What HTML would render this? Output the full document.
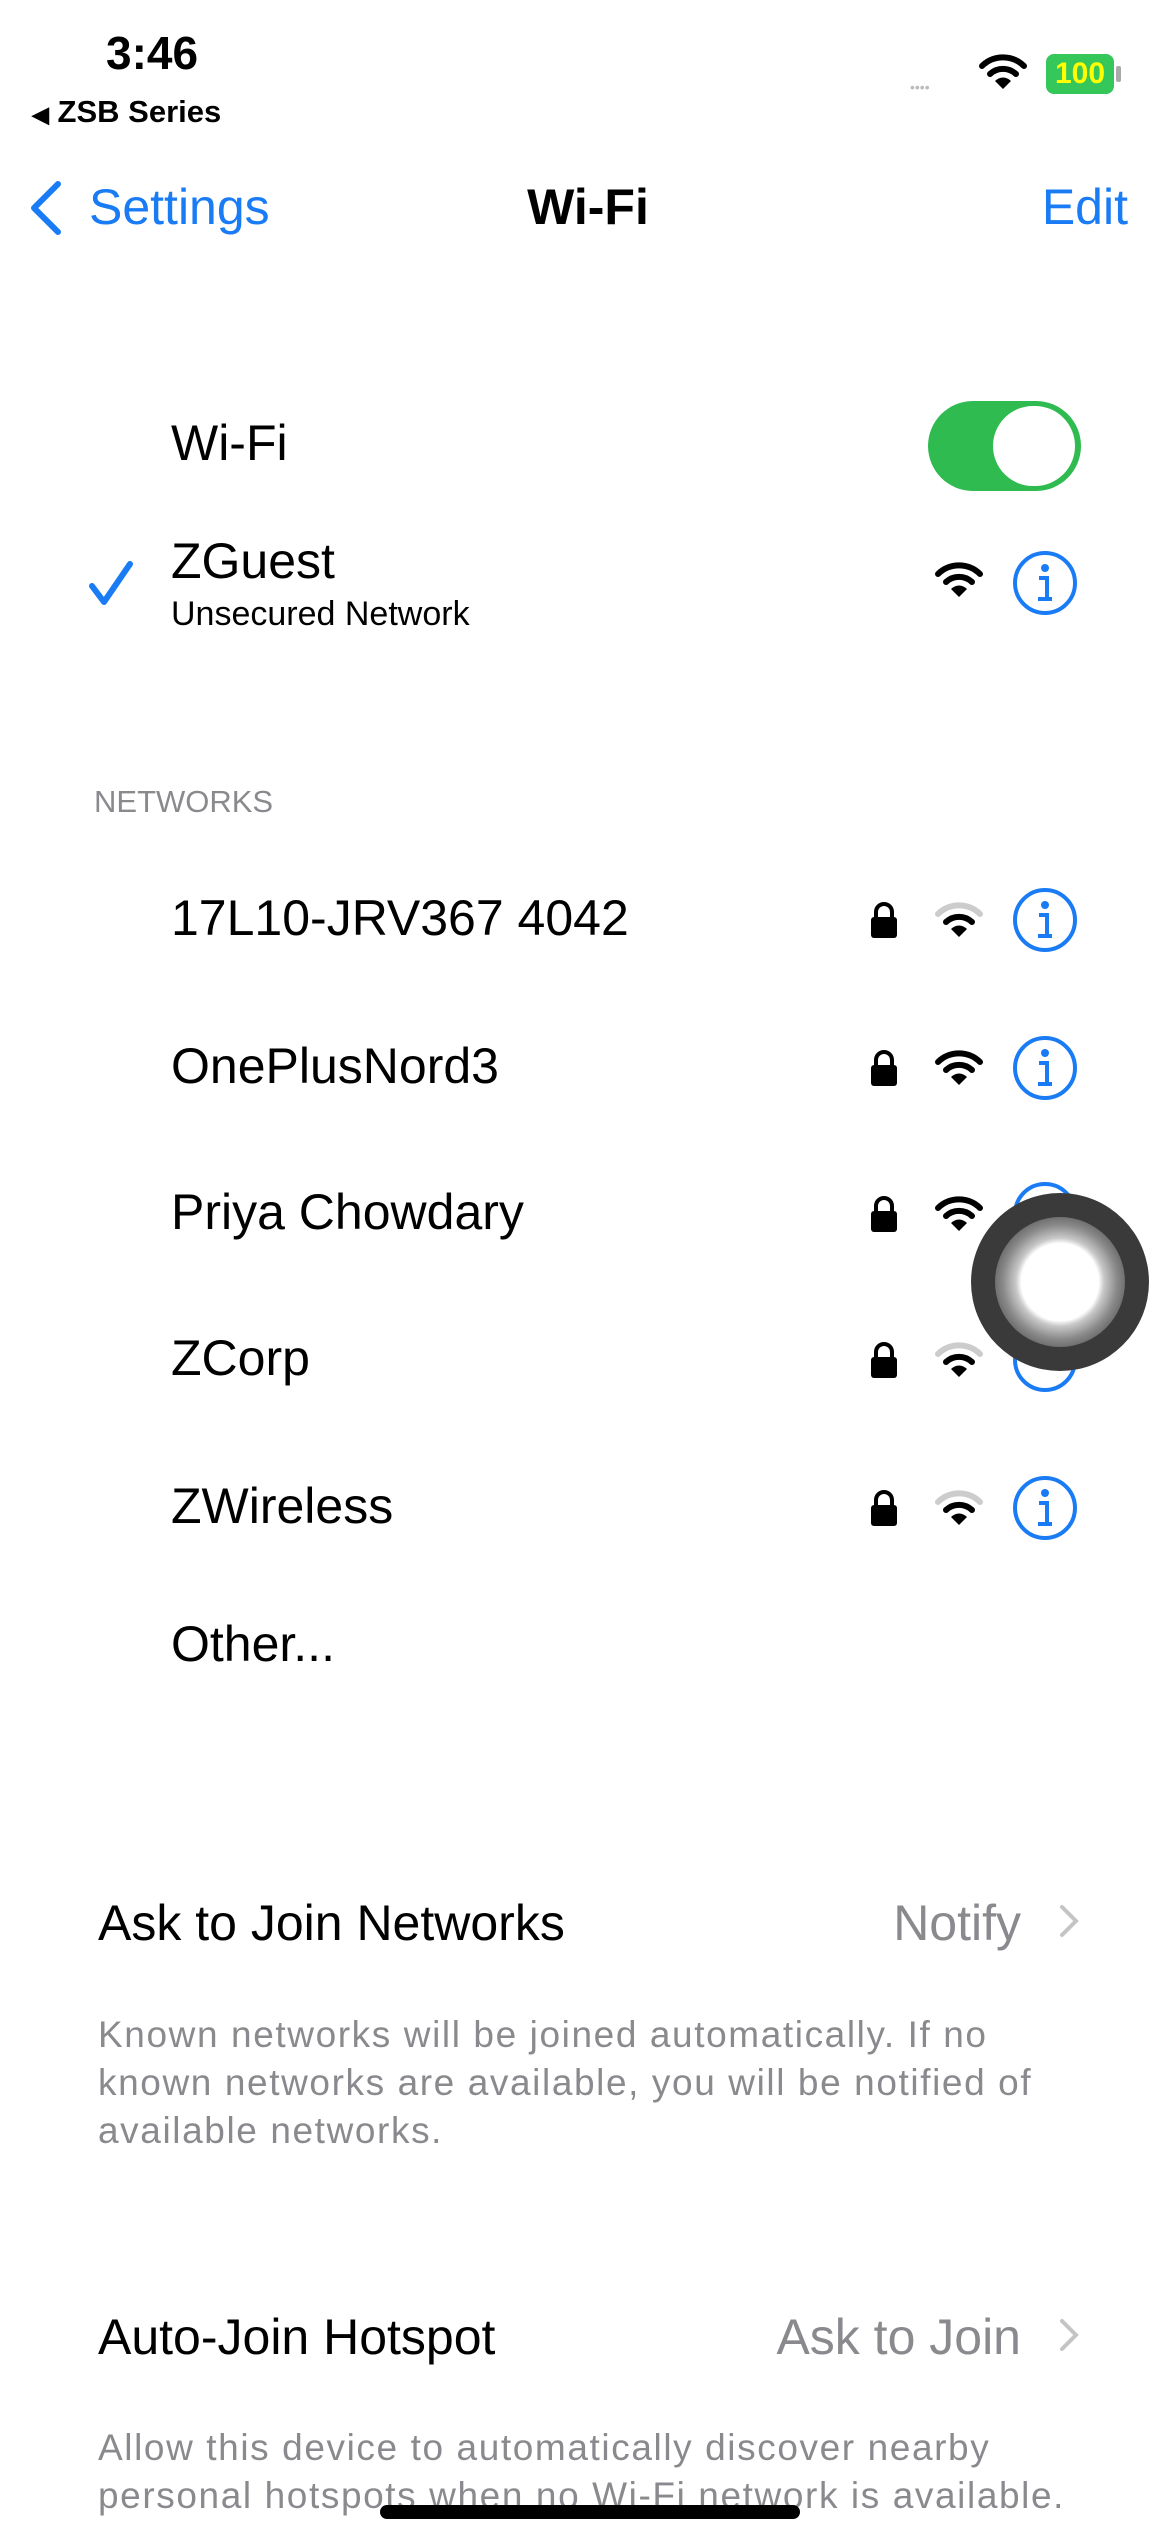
<!DOCTYPE html>
<html><head><meta charset="utf-8"><style>
html,body{margin:0;padding:0;background:#fff;}
body{width:1170px;height:2532px;position:relative;overflow:hidden;font-family:"Liberation Sans",sans-serif;color:#000;}
.a{position:absolute;white-space:nowrap;line-height:1;}
.lbl{font-size:50px;left:171px;}
.gray{color:#8a8a8e;}
.desc{font-size:37px;letter-spacing:1.6px;color:#8a8a8e;left:98px;line-height:48px;}
svg{position:absolute;}
</style></head><body>
<div class="a" style="left:106px;top:30px;font-size:46px;font-weight:bold;">3:46</div>
<div class="a" style="left:32px;top:96px;font-size:31px;font-weight:bold;"><span style="font-size:22px;">◀</span> ZSB Series</div>
<div class="a" style="left:910px;top:80px;font-size:14px;color:#bbb;">••••</div>
<svg style="left:978px;top:52px" width="50" height="40" viewBox="0 0 50 40"><path d="M4 14 A30 30 0 0 1 46 14" stroke="#000" stroke-width="6" fill="none" stroke-linecap="round"/><path d="M12 22 A19 19 0 0 1 38 22" stroke="#000" stroke-width="6" fill="none" stroke-linecap="round"/><path d="M25 37 L17 29 A11 11 0 0 1 33 29 Z" fill="#000"/></svg>
<div class="a" style="left:1046px;top:54px;width:68px;height:40px;background:#35c759;border-radius:8px;color:#ff0;font-weight:bold;font-size:30px;text-align:center;line-height:40px;">100</div>
<div class="a" style="left:1116px;top:66px;width:5px;height:16px;background:#aaa;border-radius:2px;"></div>
<svg style="left:26px;top:180px" width="40" height="56" viewBox="0 0 40 56"><path d="M32 4 L8 28 L32 52" stroke="#1a7cf5" stroke-width="6" fill="none" stroke-linecap="round" stroke-linejoin="round"/></svg>
<div class="a" style="left:89px;top:182px;font-size:50px;color:#1a7cf5;">Settings</div>
<div class="a" style="left:588px;top:182px;font-size:50px;font-weight:bold;transform:translateX(-50%);">Wi-Fi</div>
<div class="a" style="right:42px;top:182px;font-size:50px;color:#1a7cf5;">Edit</div>
<div class="a lbl" style="top:418px;">Wi-Fi</div>
<div class="a" style="left:928px;top:401px;width:153px;height:90px;border-radius:45px;background:#2fbb50;"></div>
<div class="a" style="left:990px;top:403px;width:88px;height:86px;border-radius:44px;background:#fff;border:3px solid #2fbb50;box-sizing:border-box;"></div>
<svg style="left:88px;top:560px" width="48" height="48" viewBox="0 0 48 48"><path d="M4 26 L16 42 L42 4" stroke="#1a7cf5" stroke-width="6" fill="none" stroke-linecap="round" stroke-linejoin="round"/></svg>
<div class="a lbl" style="top:536px;">ZGuest</div>
<div class="a" style="left:171px;top:597px;font-size:34px;">Unsecured Network</div>
<svg style="left:934px;top:560px" width="50" height="40" viewBox="0 0 50 40"><path d="M4 14 A30 30 0 0 1 46 14" stroke="#000" stroke-width="6" fill="none" stroke-linecap="round"/><path d="M12 22 A19 19 0 0 1 38 22" stroke="#000" stroke-width="6" fill="none" stroke-linecap="round"/><path d="M25 37 L17 29 A11 11 0 0 1 33 29 Z" fill="#000"/></svg>
<svg style="left:1011px;top:549px" width="68" height="68" viewBox="0 0 68 68"><circle cx="34" cy="34" r="30" stroke="#1a7cf5" stroke-width="4" fill="none"/><circle cx="34" cy="19" r="4" fill="#1a7cf5"/><path d="M28 29 H36 V49 M27 50 H41" stroke="#1a7cf5" stroke-width="4" fill="none"/></svg>
<div class="a" style="left:94px;top:786px;font-size:31px;color:#8a8a8e;">NETWORKS</div>

<div class="a lbl" style="top:893px;">17L10-JRV367 4042</div>
<div class="a lbl" style="top:1041px;">OnePlusNord3</div>
<div class="a lbl" style="top:1187px;">Priya Chowdary</div>
<div class="a lbl" style="top:1333px;">ZCorp</div>
<div class="a lbl" style="top:1481px;">ZWireless</div>
<div class="a lbl" style="top:1619px;">Other...</div>

<div style="position:absolute;left:0;top:900px;">
<svg style="left:868px;top:0" width="32" height="40" viewBox="0 0 32 40"><path d="M8 18 V12 A8 8 0 0 1 24 12 V18" stroke="#000" stroke-width="4" fill="none"/><rect x="3" y="17" width="26" height="21" rx="3" fill="#000"/></svg>
<svg style="left:934px;top:0" width="50" height="40" viewBox="0 0 50 40"><path d="M4 14 A30 30 0 0 1 46 14" stroke="#ccc" stroke-width="6" fill="none" stroke-linecap="round"/><path d="M12 22 A19 19 0 0 1 38 22" stroke="#000" stroke-width="6" fill="none" stroke-linecap="round"/><path d="M25 37 L17 29 A11 11 0 0 1 33 29 Z" fill="#000"/></svg>
<svg style="left:1011px;top:-14px" width="68" height="68" viewBox="0 0 68 68"><circle cx="34" cy="34" r="30" stroke="#1a7cf5" stroke-width="4" fill="none"/><circle cx="34" cy="19" r="4" fill="#1a7cf5"/><path d="M28 29 H36 V49 M27 50 H41" stroke="#1a7cf5" stroke-width="4" fill="none"/></svg>
</div>
<div style="position:absolute;left:0;top:1048px;">
<svg style="left:868px;top:0" width="32" height="40" viewBox="0 0 32 40"><path d="M8 18 V12 A8 8 0 0 1 24 12 V18" stroke="#000" stroke-width="4" fill="none"/><rect x="3" y="17" width="26" height="21" rx="3" fill="#000"/></svg>
<svg style="left:934px;top:0" width="50" height="40" viewBox="0 0 50 40"><path d="M4 14 A30 30 0 0 1 46 14" stroke="#000" stroke-width="6" fill="none" stroke-linecap="round"/><path d="M12 22 A19 19 0 0 1 38 22" stroke="#000" stroke-width="6" fill="none" stroke-linecap="round"/><path d="M25 37 L17 29 A11 11 0 0 1 33 29 Z" fill="#000"/></svg>
<svg style="left:1011px;top:-14px" width="68" height="68" viewBox="0 0 68 68"><circle cx="34" cy="34" r="30" stroke="#1a7cf5" stroke-width="4" fill="none"/><circle cx="34" cy="19" r="4" fill="#1a7cf5"/><path d="M28 29 H36 V49 M27 50 H41" stroke="#1a7cf5" stroke-width="4" fill="none"/></svg>
</div>
<div style="position:absolute;left:0;top:1194px;">
<svg style="left:868px;top:0" width="32" height="40" viewBox="0 0 32 40"><path d="M8 18 V12 A8 8 0 0 1 24 12 V18" stroke="#000" stroke-width="4" fill="none"/><rect x="3" y="17" width="26" height="21" rx="3" fill="#000"/></svg>
<svg style="left:934px;top:0" width="50" height="40" viewBox="0 0 50 40"><path d="M4 14 A30 30 0 0 1 46 14" stroke="#000" stroke-width="6" fill="none" stroke-linecap="round"/><path d="M12 22 A19 19 0 0 1 38 22" stroke="#000" stroke-width="6" fill="none" stroke-linecap="round"/><path d="M25 37 L17 29 A11 11 0 0 1 33 29 Z" fill="#000"/></svg>
<svg style="left:1011px;top:-14px" width="68" height="68" viewBox="0 0 68 68"><circle cx="34" cy="34" r="30" stroke="#1a7cf5" stroke-width="4" fill="none"/></svg>
</div>
<div style="position:absolute;left:0;top:1340px;">
<svg style="left:868px;top:0" width="32" height="40" viewBox="0 0 32 40"><path d="M8 18 V12 A8 8 0 0 1 24 12 V18" stroke="#000" stroke-width="4" fill="none"/><rect x="3" y="17" width="26" height="21" rx="3" fill="#000"/></svg>
<svg style="left:934px;top:0" width="50" height="40" viewBox="0 0 50 40"><path d="M4 14 A30 30 0 0 1 46 14" stroke="#ccc" stroke-width="6" fill="none" stroke-linecap="round"/><path d="M12 22 A19 19 0 0 1 38 22" stroke="#000" stroke-width="6" fill="none" stroke-linecap="round"/><path d="M25 37 L17 29 A11 11 0 0 1 33 29 Z" fill="#000"/></svg>
<svg style="left:1011px;top:-14px" width="68" height="68" viewBox="0 0 68 68"><circle cx="34" cy="34" r="30" stroke="#1a7cf5" stroke-width="4" fill="none"/><path d="M27 36 H41" stroke="#1a7cf5" stroke-width="4"/></svg>
</div>
<div style="position:absolute;left:0;top:1488px;">
<svg style="left:868px;top:0" width="32" height="40" viewBox="0 0 32 40"><path d="M8 18 V12 A8 8 0 0 1 24 12 V18" stroke="#000" stroke-width="4" fill="none"/><rect x="3" y="17" width="26" height="21" rx="3" fill="#000"/></svg>
<svg style="left:934px;top:0" width="50" height="40" viewBox="0 0 50 40"><path d="M4 14 A30 30 0 0 1 46 14" stroke="#ccc" stroke-width="6" fill="none" stroke-linecap="round"/><path d="M12 22 A19 19 0 0 1 38 22" stroke="#000" stroke-width="6" fill="none" stroke-linecap="round"/><path d="M25 37 L17 29 A11 11 0 0 1 33 29 Z" fill="#000"/></svg>
<svg style="left:1011px;top:-14px" width="68" height="68" viewBox="0 0 68 68"><circle cx="34" cy="34" r="30" stroke="#1a7cf5" stroke-width="4" fill="none"/><circle cx="34" cy="19" r="4" fill="#1a7cf5"/><path d="M28 29 H36 V49 M27 50 H41" stroke="#1a7cf5" stroke-width="4" fill="none"/></svg>
</div>

<div class="a" style="left:971px;top:1193px;width:178px;height:178px;border-radius:50%;background:#3a3a3a;"></div>
<div class="a" style="left:995px;top:1217px;width:130px;height:130px;border-radius:50%;background:radial-gradient(circle,#fff 0 42%,#c8c8c8 48%,#8a8a8a 62%,#5a5a5a 78%,#444 100%);"></div>

<div class="a" style="left:98px;top:1898px;font-size:50px;">Ask to Join Networks</div>
<div class="a gray" style="right:149px;top:1898px;font-size:50px;">Notify</div>
<svg style="left:1056px;top:1901px" width="26" height="40" viewBox="0 0 26 40"><path d="M6 6 L20 20 L6 34" stroke="#c4c4c7" stroke-width="4" fill="none" stroke-linecap="round"/></svg>
<div class="a desc" style="top:2011px;">Known networks will be joined automatically. If no<br>known networks are available, you will be notified of<br>available networks.</div>

<div class="a" style="left:98px;top:2312px;font-size:50px;">Auto-Join Hotspot</div>
<div class="a gray" style="right:149px;top:2312px;font-size:50px;">Ask to Join</div>
<svg style="left:1056px;top:2315px" width="26" height="40" viewBox="0 0 26 40"><path d="M6 6 L20 20 L6 34" stroke="#c4c4c7" stroke-width="4" fill="none" stroke-linecap="round"/></svg>
<div class="a desc" style="top:2424px;">Allow this device to automatically discover nearby<br>personal hotspots when no Wi-Fi network is available.</div>

<div class="a" style="left:380px;top:2505px;width:420px;height:14px;border-radius:7px;background:#000;"></div>
</body></html>
